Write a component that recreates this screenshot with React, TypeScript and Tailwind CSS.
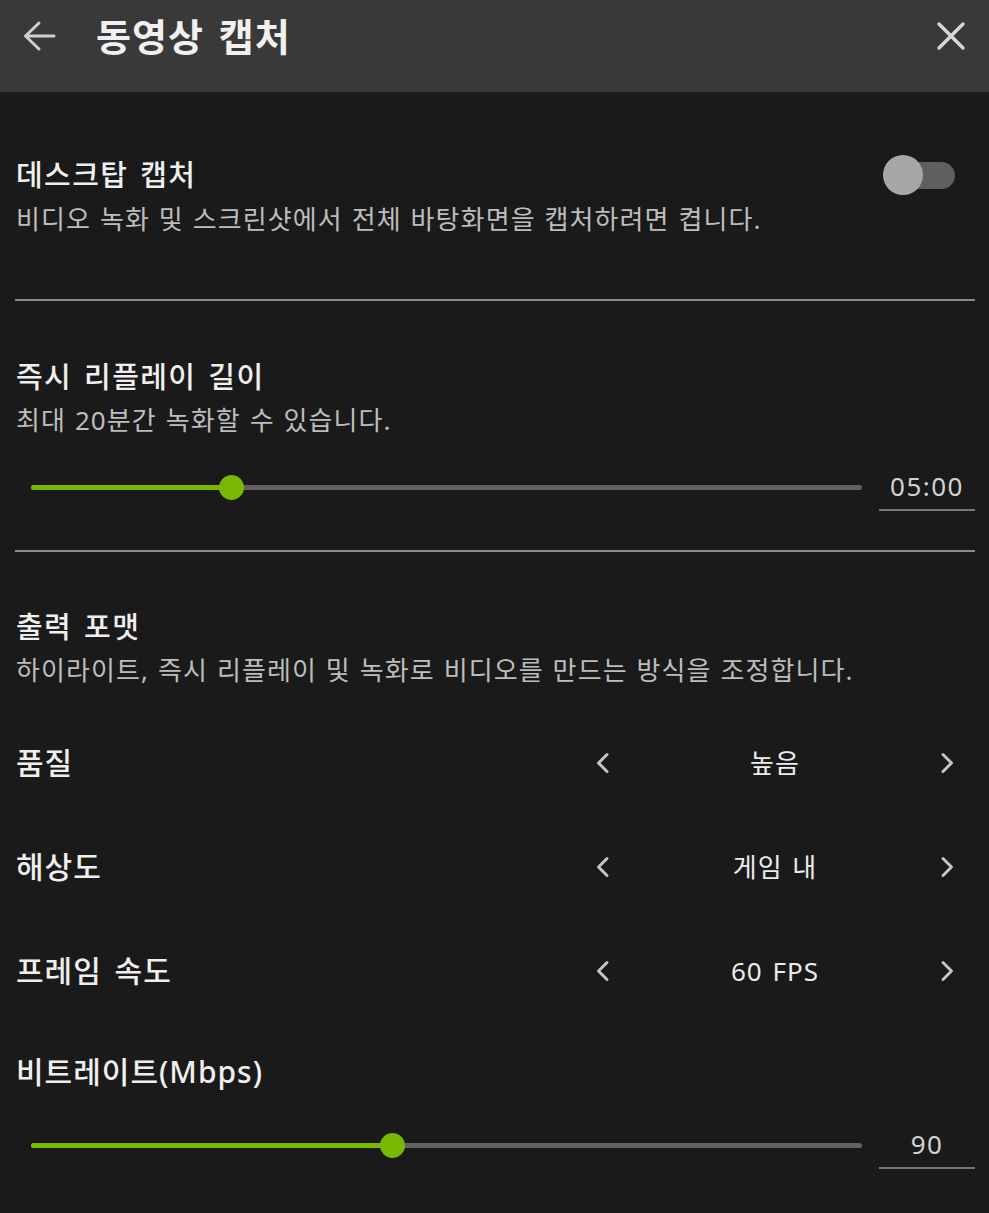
import React from 'react';

const FONT = "font-['Noto_Sans','Noto_Sans_CJK_KR',sans-serif]";

const Chevron: React.FC<{ dir: 'left' | 'right' }> = ({ dir }) => (
  <svg width="15" height="22" viewBox="0 0 15 22" fill="none" className="text-[#c4c4c4]">
    <path
      d={dir === 'left' ? 'M12 2.5 L3.5 11 L12 19.5' : 'M3 2.5 L11.5 11 L3 19.5'}
      stroke="currentColor"
      strokeWidth="3"
      strokeLinecap="round"
      strokeLinejoin="round"
    />
  </svg>
);

const Slider: React.FC<{ fill: number; value: string }> = ({ fill, value }) => (
  <div className="flex items-center h-[48px]">
    {/* track */}
    <div className="relative ml-[16px] w-[831px] h-[5px] rounded-full bg-[#626262]">
      <div className="h-full rounded-full bg-[#76b900]" style={{ width: fill }} />
      <div
        className="absolute top-1/2 w-[25px] h-[25px] -mt-[12.5px] -ml-[12.5px] rounded-full bg-[#76b900]"
        style={{ left: fill }}
      />
    </div>
    <div className="ml-auto w-[96px] h-[48px] flex items-center justify-center border-b-2 border-[#777777] text-[26px] tracking-[1.5px] text-[#d2d2d2]">
      {value}
    </div>
  </div>
);

const Selector: React.FC<{ label: string; value: string }> = ({ label, value }) => (
  <div className="flex items-center justify-between h-[104px]">
    <span className="text-[30px] font-medium tracking-[1px] [word-spacing:4px] text-[#efefef] leading-[40px]">{label}</span>
    <div className="w-[360px] mr-[20px] flex items-center justify-between">
      <Chevron dir="left" />
      <span className="text-[26px] tracking-[1px] [word-spacing:2px] text-[#ececec]">{value}</span>
      <Chevron dir="right" />
    </div>
  </div>
);

const Title: React.FC<{ children: React.ReactNode }> = ({ children }) => (
  <h2 className="pl-[1px] text-[29px] font-medium tracking-[1.4px] [word-spacing:3px] text-[#efefef] leading-[40px]">
    {children}
  </h2>
);

const Desc: React.FC<{ children: React.ReactNode }> = ({ children }) => (
  <p className="pl-[1px] text-[26px] tracking-[1.1px] [word-spacing:1px] text-[#bdbdbd] leading-[36px]">{children}</p>
);

export default function App() {
  return (
    <div className={`${FONT} w-[989px] min-h-[1213px] bg-[#1a1a1a]`}>
      {/* Header */}
      <header className="h-[92px] bg-[#393939]">
        <div className="h-[72px] flex items-center pl-[22px] pr-[23px]">
          <svg width="34" height="32" viewBox="0 0 34 32" fill="none" className="text-[#cfcfcf]">
            <path d="M32 16 H4 M17 3 L3.5 16 L17 29" stroke="currentColor" strokeWidth="3" strokeLinecap="round" strokeLinejoin="round" />
          </svg>
          <h1 className="ml-[40px] text-[38px] font-bold tracking-[1px] [word-spacing:4px] text-[#f0f0f0] leading-none">동영상 캡처</h1>
          <svg width="30" height="30" viewBox="0 0 30 30" fill="none" className="ml-auto text-[#d6d6d6]">
            <path d="M3 3 L27 27 M27 3 L3 27" stroke="currentColor" strokeWidth="3.5" strokeLinecap="round" />
          </svg>
        </div>
      </header>

      <div className="pl-[15px] pr-[14px]">
        {/* Desktop capture */}
        <section className="pt-[63px]">
          <div className="flex items-center justify-between h-[40px]">
            <Title>데스크탑 캡처</Title>
            <div className="relative mr-[20px] w-[72px] h-[40px] flex items-center">
              <div className="ml-[17px] w-[55px] h-[27px] rounded-full bg-[#5f5f5f]" />
              <div className="absolute left-0 top-0 w-[40px] h-[40px] rounded-full bg-[#a7a7a7]" />
            </div>
          </div>
          <div className="mt-[6px]">
            <Desc>비디오 녹화 및 스크린샷에서 전체 바탕화면을 캡처하려면 켭니다.</Desc>
          </div>
          <div className="mt-[62px] h-[2px] bg-[#8a8a8a]" />
        </section>

        {/* Instant replay length */}
        <section className="pt-[56px]">
          <Title>즉시 리플레이 길이</Title>
          <div className="mt-[5px]">
            <Desc>최대 20분간 녹화할 수 있습니다.</Desc>
          </div>
          <div className="mt-[25px]">
            <Slider fill={200} value="05:00" />
          </div>
          <div className="mt-[39px] h-[2px] bg-[#8a8a8a]" />
        </section>

        {/* Output format */}
        <section className="pt-[55px]">
          <Title>출력 포맷</Title>
          <div className="mt-[5px]">
            <Desc>하이라이트, 즉시 리플레이 및 녹화로 비디오를 만드는 방식을 조정합니다.</Desc>
          </div>
          <div className="mt-[23px] pl-[1px]">
            <Selector label="품질" value="높음" />
            <Selector label="해상도" value="게임 내" />
            <Selector label="프레임 속도" value="60 FPS" />
          </div>
          <h3 className="mt-[29px] pl-[1px] text-[30px] font-medium tracking-[1px] text-[#efefef] leading-[40px]">비트레이트(Mbps)</h3>
          <div className="mt-[29px]">
            <Slider fill={361} value="90" />
          </div>
        </section>
      </div>
    </div>
  );
}
